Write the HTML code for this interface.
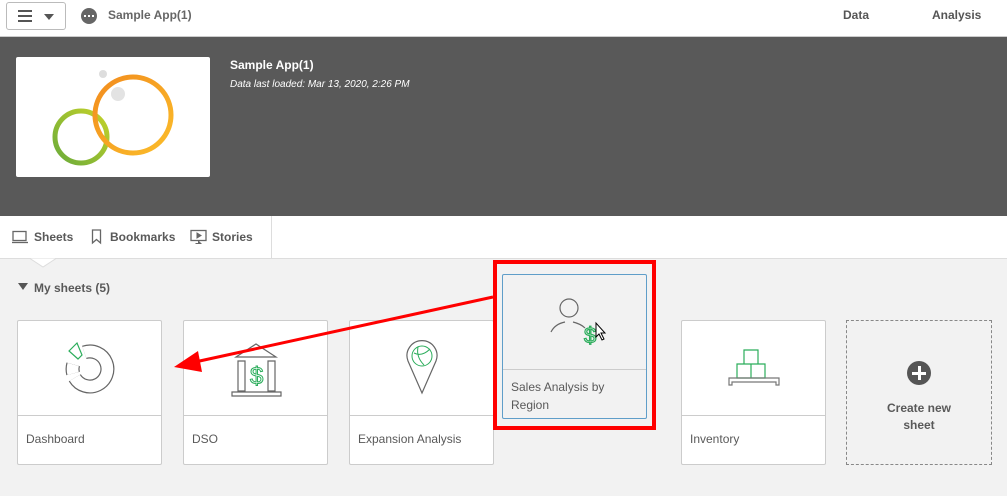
<!DOCTYPE html>
<html><head><style>
*{margin:0;padding:0;box-sizing:border-box}
body{width:1007px;height:496px;overflow:hidden;background:#f2f2f2;font-family:"Liberation Sans",sans-serif;position:relative;color:#595959}
.abs{position:absolute}
.card{position:absolute;background:#fff;border:1px solid #ccc;border-radius:2px;width:145px;height:145px}
.card .div{position:absolute;left:0;right:0;top:94px;border-top:1px solid #ccc}
.card .lbl{position:absolute;left:8px;top:111px;font-size:12px;color:#595959}
.card svg{position:absolute;left:0;top:0}
</style></head><body>
<div class="abs" style="left:0;top:0;width:1007px;height:37px;background:#fff;border-bottom:1px solid #ccc"></div>
<div class="abs" style="left:6px;top:2px;width:60px;height:28px;border:1px solid #bbb;border-radius:3px;background:#fff"></div>
<div class="abs" style="left:18px;top:10px;width:14px;height:2px;background:#555;box-shadow:0 5px 0 #555,0 10px 0 #555"></div>
<div class="abs" style="left:44px;top:14px;border-left:5px solid transparent;border-right:5px solid transparent;border-top:6px solid #555"></div>
<div class="abs" style="left:81px;top:8px;width:16px;height:16px;border-radius:50%;background:#666"></div>
<div class="abs" style="left:84px;top:15px;width:2px;height:2px;background:#fff;box-shadow:4px 0 0 #fff,8px 0 0 #fff"></div>
<div class="abs" style="left:108px;top:8px;font-size:12px;font-weight:bold;color:#666">Sample App(1)</div>
<div class="abs" style="left:843px;top:8px;font-size:12px;font-weight:bold;color:#555">Data</div>
<div class="abs" style="left:932px;top:8px;font-size:12px;font-weight:bold;color:#555">Analysis</div>

<div class="abs" style="left:0;top:37px;width:1007px;height:179px;background:#595959"></div>
<div class="abs" style="left:16px;top:57px;width:194px;height:120px;background:#fff;border-radius:2px"></div>
<svg class="abs" style="left:16px;top:57px" width="194" height="120">
<defs><linearGradient id="g" x1="0" y1="1" x2="1" y2="0"><stop offset="0" stop-color="#6aab3a"/><stop offset="1" stop-color="#c4d22a"/></linearGradient>
<linearGradient id="o" x1="0" y1="0" x2="1" y2="1"><stop offset="0" stop-color="#f28c1e"/><stop offset="1" stop-color="#fbbd2a"/></linearGradient></defs>
<circle cx="65" cy="80" r="26" fill="none" stroke="url(#g)" stroke-width="5"/>
<circle cx="117" cy="58" r="38" fill="none" stroke="url(#o)" stroke-width="5"/>
<circle cx="87" cy="17" r="4" fill="#ddd"/><circle cx="102" cy="37" r="7" fill="#e3e3e3"/>
</svg>
<div class="abs" style="left:230px;top:58px;font-size:12px;font-weight:bold;color:#fff">Sample App(1)</div>
<div class="abs" style="left:230px;top:79px;font-size:10px;font-style:italic;color:#fff">Data last loaded: Mar 13, 2020, 2:26 PM</div>

<div class="abs" style="left:0;top:216px;width:1007px;height:43px;background:#fff;border-bottom:1px solid #ddd"></div>
<div class="abs" style="left:271px;top:216px;width:1px;height:42px;background:#ddd"></div>
<svg class="abs" style="left:30px;top:258px" width="26" height="10"><path d="M0 0.5 L13 9 L26 0.5" fill="#fff" stroke="#ddd"/></svg>
<svg class="abs" style="left:12px;top:230px" width="16" height="14"><rect x="1" y="1.5" width="13" height="9" fill="none" stroke="#666" stroke-width="1.3"/><path d="M0 12.5h16" stroke="#666" stroke-width="1.3"/></svg>
<div class="abs" style="left:34px;top:230px;font-size:12px;font-weight:bold;color:#595959">Sheets</div>
<svg class="abs" style="left:91px;top:229px" width="12" height="16"><path d="M1.5 1h8v13l-4-3.5-4 3.5z" fill="none" stroke="#666" stroke-width="1.3"/></svg>
<div class="abs" style="left:110px;top:230px;font-size:12px;font-weight:bold;color:#595959">Bookmarks</div>
<svg class="abs" style="left:190px;top:229px" width="18" height="16"><rect x="1" y="1.5" width="15" height="10" fill="none" stroke="#666" stroke-width="1.3"/><path d="M7 4v5l4-2.5z M8.5 11.5v3h-3h6" fill="#666" stroke="#666" stroke-width="1"/></svg>
<div class="abs" style="left:212px;top:230px;font-size:12px;font-weight:bold;color:#595959">Stories</div>

<div class="abs" style="left:18px;top:283px;border-left:5px solid transparent;border-right:5px solid transparent;border-top:7px solid #555"></div>
<div class="abs" style="left:34px;top:281px;font-size:12px;font-weight:bold;color:#595959">My sheets (5)</div>

<div class="card" style="left:17px;top:320px"><svg width="145" height="94">
<g fill="none">
<path d="M66.3 31.4 A17.5 17.5 0 1 1 56.8 56.8" stroke="#666" stroke-width="14"/>
<path d="M66.3 31.4 A17.5 17.5 0 1 1 56.8 56.8" stroke="#fff" stroke-width="11.6"/>
<path d="M55.1 52.5 A17.5 17.5 0 0 1 55.2 43.4" stroke="#666" stroke-width="14"/>
<path d="M55.1 52.5 A17.5 17.5 0 0 1 55.2 43.4" stroke="#fff" stroke-width="11.6"/>
<path d="M53 33 L58 28 L63 18 L57 14 Z" stroke="none"/>
</g>
<path d="M51 30 L59 22 L64 34 L60 38 Z" fill="#fff" stroke="#2bad5b" stroke-width="1.2"/>
</svg><div class="div"></div><div class="lbl">Dashboard</div></div>
<div class="card" style="left:183px;top:320px"><svg width="145" height="94"><path d="M52 36 L72 23 92 36z" fill="none" stroke="#666" stroke-width="1.2"/><path d="M54 40h7v30h-7z M84 40h7v30h-7z M48 71h49v4h-49z" fill="none" stroke="#666" stroke-width="1.2"/><text x="66" y="63" font-size="24" fill="none" stroke="#2bad5b" stroke-width="1" font-family="Liberation Sans">$</text></svg><div class="div"></div><div class="lbl">DSO</div></div>
<div class="card" style="left:349px;top:320px"><svg width="145" height="94"><path d="M72 72 L58 40 A15 15 0 1 1 86 40 Z" fill="none" stroke="#666" stroke-width="1.2"/><circle cx="72" cy="35" r="10" fill="none" stroke="#2bad5b" stroke-width="1"/><path d="M64 32q8 4 16-4 M68 26q-2 10 6 18" fill="none" stroke="#2bad5b"/></svg><div class="div"></div><div class="lbl">Expansion Analysis</div></div>
<div class="card" style="left:502px;top:274px;background:#f2f2f2;border-color:#5f9ec9"><svg width="145" height="94"><circle cx="66" cy="33" r="9" fill="none" stroke="#666" stroke-width="1.2"/><path d="M48 57q4-8 14-10 M70 47q8 2 12 6" fill="none" stroke="#666" stroke-width="1.2"/><text x="81" y="68" font-size="22" fill="none" stroke="#2bad5b" stroke-width="1.2" font-family="Liberation Sans">$</text><path d="M93 48v14l3-3 3 6 2-1-3-6h4z" fill="#fff" stroke="#000" stroke-width="1"/></svg><div class="div" style="top:94px;border-color:#ccc"></div><div class="lbl" style="top:103px;line-height:18px">Sales Analysis by<br>Region</div></div>
<div class="card" style="left:681px;top:320px"><svg width="145" height="94"><path d="M62 29h14v14h-14z M55 43h14v14h-14z M69 43h14v14h-14z" fill="none" stroke="#2bad5b" stroke-width="1.2"/><path d="M47 57h50v7h-3v-3h-44v3h-3z" fill="none" stroke="#777" stroke-width="1.2"/></svg><div class="div"></div><div class="lbl">Inventory</div></div>
<div class="abs" style="left:846px;top:320px;width:146px;height:145px;border:1px dashed #888"></div>
<div class="abs" style="left:907px;top:361px;width:24px;height:24px;border-radius:50%;background:#555"></div>
<div class="abs" style="left:912px;top:371.5px;width:14px;height:3px;background:#fff"></div>
<div class="abs" style="left:917.5px;top:366px;width:3px;height:14px;background:#fff"></div>
<div class="abs" style="left:846px;top:400px;width:146px;text-align:center;font-size:12px;font-weight:bold;color:#595959;line-height:17px">Create new<br>sheet</div>

<div class="abs" style="left:493px;top:260px;width:163px;height:170px;border:4px solid #f00"></div>
<svg class="abs" style="left:0;top:0" width="1007" height="496"><line x1="493" y1="297" x2="195" y2="362" stroke="#f00" stroke-width="3"/><path d="M174 367 L198 351 L202 372 Z" fill="#f00"/></svg>
</body></html>
